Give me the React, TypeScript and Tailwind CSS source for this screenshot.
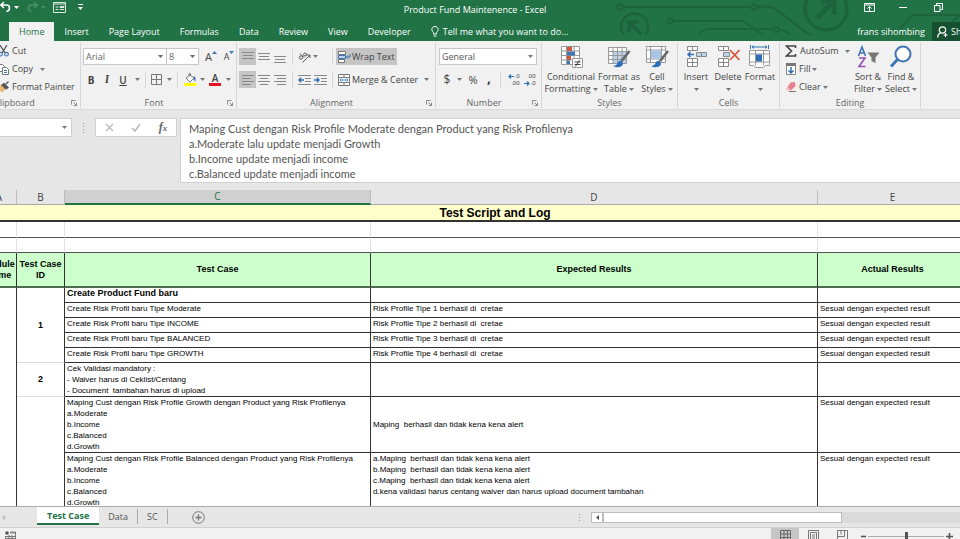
import { useState, ReactNode } from 'react';
import clsx from 'clsx';

type TestRow = {
  id?: string;
  idSpan?: number;
  test: string;
  bold?: boolean;
  expected?: string;
  expectedMiddle?: boolean;
  actual?: string;
  height: string;
};

const TABS = ['Home', 'Insert', 'Page Layout', 'Formulas', 'Data', 'Review', 'View', 'Developer'];

const SHEETS = ['Test Case', 'Data', 'SC'];

const FORMULA = [
  'Maping Cust dengan Risk Profile Moderate dengan Product yang Risk Profilenya',
  'a.Moderate lalu update menjadi Growth',
  'b.Income update menjadi income',
  'c.Balanced update menjadi income',
].join('\n');

const SESUAI = 'Sesuai dengan expected result';

const ROWS: TestRow[] = [
  { id: '1', idSpan: 5, test: 'Create Product Fund baru', bold: true, height: 'h-[15px]' },
  { test: 'Create Risk Profil baru Tipe Moderate', expected: 'Risk Profile Tipe 1 berhasil di  cretae', actual: SESUAI, height: 'h-[15px]' },
  { test: 'Create Risk Profil baru Tipe INCOME', expected: 'Risk Profile Tipe 2 berhasil di  cretae', actual: SESUAI, height: 'h-[15px]' },
  { test: 'Create Risk Profil baru Tipe BALANCED', expected: 'Risk Profile Tipe 3 berhasil di  cretae', actual: SESUAI, height: 'h-[15px]' },
  { test: 'Create Risk Profil baru Tipe GROWTH', expected: 'Risk Profile Tipe 4 berhasil di  cretae', actual: SESUAI, height: 'h-[15px]' },
  {
    id: '2',
    idSpan: 1,
    test: 'Cek Validasi mandatory :\n- Waiver harus di Ceklist/Centang\n- Document  tambahan harus di upload',
    height: 'h-[34px]',
  },
  {
    id: '',
    idSpan: 2,
    test: 'Maping Cust dengan Risk Profile Growth dengan Product yang Risk Profilenya\na.Moderate\nb.Income\nc.Balanced\nd.Growth',
    expected: 'Maping  berhasil dan tidak kena kena alert',
    expectedMiddle: true,
    actual: SESUAI,
    height: 'h-[56px]',
  },
  {
    test: 'Maping Cust dengan Risk Profile Balanced dengan Product yang Risk Profilenya\na.Moderate\nb.Income\nc.Balanced\nd.Growth',
    expected:
      'a.Maping  berhasil dan tidak kena kena alert\nb.Maping  berhasil dan tidak kena kena alert\nc.Maping  berhasil dan tidak kena kena alert\nd.kena validasi harus centang waiver dan harus upload document tambahan',
    actual: SESUAI,
    height: 'h-[56px]',
  },
];

function Caret({ className }: { className?: string }) {
  return (
    <svg viewBox="0 0 5 3" className={clsx('h-[3px] w-[5px] shrink-0', className)}>
      <path d="M0 0h5L2.500 3z" fill="currentColor" />
    </svg>
  );
}

function CaretButton({ label, className }: { label: string; className?: string }) {
  return (
    <button aria-label={label} className={clsx('flex h-[17px] shrink-0 items-center justify-center text-[#777]', className)}>
      <Caret />
    </button>
  );
}

function IconButton({ label, className, children }: { label: string; className?: string; children: ReactNode }) {
  return (
    <button aria-label={label} className={clsx('flex h-[17px] shrink-0 items-center justify-center', className)}>
      {children}
    </button>
  );
}

function Sep({ className }: { className?: string }) {
  return <span className={clsx('h-4 w-px shrink-0 bg-[#d8d8d8]', className)} />;
}

function Group({ label, className, launcher, children }: { label: string; className?: string; launcher?: boolean; children: ReactNode }) {
  return (
    <section aria-label={label} className={clsx('flex h-[65px] shrink-0 flex-col border-r border-[#d5d5d5]', className)}>
      <div className="min-h-0 flex-1">{children}</div>
      <div className="flex h-[11px] items-center leading-[11px] text-[#666]">
        <span className="flex-1 text-center">{label}</span>
        {launcher && (
          <button aria-label={`${label} settings`} className="mr-[3px] w-[6px]">
            <svg viewBox="0 0 7 7" className="h-[6px] w-[6px]" fill="none" stroke="#777">
              <path d="M.5 5.500V.5h5M3 3l3 3M6.500 3v3.500H3" />
            </svg>
          </button>
        )}
      </div>
    </section>
  );
}

function BigButton({ lines, className, children }: { lines: string[]; className?: string; children: ReactNode }) {
  return (
    <button className={clsx('flex shrink-0 flex-col items-center pt-[2px]', className)}>
      <svg viewBox="0 0 24 24" className="h-6 w-6" fill="none">
        {children}
      </svg>
      <span className="mt-0.5 whitespace-nowrap leading-3">{lines[0]}</span>
      <span className="flex h-3 items-center gap-0.5 whitespace-nowrap leading-3">
        {lines[1]}
        <Caret className="text-[#777]" />
      </span>
    </button>
  );
}

// Horizontal rules [y, x1, x2] for the alignment buttons
function Lines({ rows }: { rows: [number, number, number][] }) {
  return (
    <svg viewBox="0 0 12 12" className="h-3 w-3" stroke="#888">
      {rows.map(([y, x1, x2]) => (
        <path key={y} d={`M${x1} ${y}.5H${x2}`} />
      ))}
    </svg>
  );
}

function DecimalArrow({ right }: { right?: boolean }) {
  return (
    <svg viewBox="0 0 6 5" className={clsx('h-[5px] w-[6px]', right && 'rotate-180')} fill="none" stroke="#2f6fb5" strokeWidth="1.200">
      <path d="M6 2.500H1M3 .5l-2 2 2 2" />
    </svg>
  );
}

function TitleBar() {
  return (
    <div className="relative flex h-[22px] items-center">
      <div className="flex w-[100px] items-center pb-2 text-white">
        <button aria-label="Undo" className="h-3 w-[11px]">
          <svg viewBox="0 0 11 12" className="h-3 w-[11px]" fill="none" stroke="currentColor" strokeWidth="1.600">
            <path d="M4 1L.8 4 4 7M1 4h5.500c4 0 4 5.500 0 6.500" />
          </svg>
        </button>
        <Caret className="ml-[3px]" />
        <button aria-label="Redo" className="ml-2 h-3 w-[11px] text-[#4d8f6b]">
          <svg viewBox="0 0 11 12" className="h-3 w-[11px]" fill="none" stroke="currentColor" strokeWidth="1.600">
            <path d="M7 1l3.200 3L7 7M10 4H4.500c-4 0-4 5.500 0 6.500" />
          </svg>
        </button>
        <Caret className="ml-[3px] text-[#4d8f6b]" />
        <button aria-label="Form" className="ml-[7px]">
          <svg viewBox="0 0 13 11" className="h-[11px] w-[13px]" fill="none" stroke="#d8eadf">
            <path d="M.5.5h12v10H.5zM.5 2h12M2.500 5h3M2.500 7.500h3" />
            <path d="M7 4.500h4v1H7zM7 7.500h4" />
          </svg>
        </button>
        <button aria-label="Customize toolbar" className="ml-3">
          <svg viewBox="0 0 5 6" className="h-[6px] w-[5px]" fill="#fff">
            <path d="M0 0h5v1H0zM0 3h5L2.500 6z" />
          </svg>
        </button>
      </div>
      <h1 className="flex-1 pb-0.5 pr-[10px] text-center leading-4 text-white">Product Fund Maintenence - Excel</h1>
      <div className="flex w-[100px] items-center gap-6 pb-2 pl-1 text-white">
        <button aria-label="Ribbon display options">
          <svg viewBox="0 0 11 9" className="h-[9px] w-[11px]" fill="none" stroke="currentColor">
            <path d="M.5.5h10v8H.5zM.5 2h10M5.500 8V4M3.500 5.500l2-2 2 2" />
          </svg>
        </button>
        <button aria-label="Minimize">
          <svg viewBox="0 0 8 9" className="h-[9px] w-2" stroke="currentColor">
            <path d="M0 4.500h8" />
          </svg>
        </button>
        <button aria-label="Restore">
          <svg viewBox="0 0 9 9" className="ml-[3px] h-[9px] w-[9px]" fill="none" stroke="currentColor">
            <path d="M.5 2.500h5.500v6H.5zM2.500 2V.5h6v6H6.500" />
          </svg>
        </button>
      </div>
    </div>
  );
}

function Circuit() {
  return (
    <svg viewBox="0 0 360 35" className="pointer-events-none absolute right-0 top-0 h-[35px] w-[360px]" fill="none" stroke="#1d643c" strokeWidth="2">
      <circle cx="20" cy="7" r="2.800" />
      <path d="M23 7h128" />
      <circle cx="154" cy="7" r="2.800" />
      <path d="M157 7h13c3 0 5 2 8 4l33 25" strokeWidth="2.500" />
      <circle cx="70" cy="21" r="2.800" />
      <path d="M73 21h70l20 14M98 36c4-5 7-7 11-7h64" />
      <circle cx="176" cy="29.500" r="2.800" />
      <path d="M179 30h4l9 6" />
      <circle cx="34.500" cy="27" r="13.500" strokeWidth="2.500" />
      <path d="M41 34L30 23M29 32v-10h10" strokeWidth="3.500" />
      <circle cx="226" cy="9" r="21" strokeWidth="3.500" />
      <path d="M217 18l16-16M221 1h13v14" strokeWidth="5" />
      <path d="M300 29l12-14h48M352 22l8-7" />
    </svg>
  );
}

function RibbonTabs() {
  const [active, setActive] = useState('Home');

  return (
    <div className="relative flex h-[19px] items-stretch pl-[9px] text-white">
      <nav className="flex">
        {TABS.map(tab => (
          <button
            key={tab}
            onClick={() => setActive(tab)}
            className={clsx('whitespace-nowrap px-[10px]', tab === active && 'bg-[#f1f1f1] text-[#217346]')}
          >
            {tab}
          </button>
        ))}
      </nav>
      <button className="ml-[10px] flex items-center gap-1 whitespace-nowrap">
        <svg viewBox="0 0 8 11" className="h-[11px] w-2" fill="none" stroke="#fff">
          <path d="M2.500 8V6.500C-.5 4 1 .5 4 .5s4.500 3.500 1.500 6V8zM2.500 10h3" />
        </svg>
        Tell me what you want to do...
      </button>
      <div className="ml-auto flex items-stretch">
        <button className="mr-[7px] whitespace-nowrap">frans sihombing</button>
        <button className="flex w-7 items-center gap-[3px] overflow-hidden whitespace-nowrap bg-[#155030] pl-[5px]">
          <svg viewBox="0 0 11 12" className="h-3 w-[11px] shrink-0" fill="none" stroke="#fff" strokeWidth="1.200">
            <circle cx="5.500" cy="4" r="3.200" />
            <path d="M.7 11.500c0-3 1.300-4 3-4.700M8.500 7v4M6.500 9h4" />
          </svg>
          Share
        </button>
      </div>
    </div>
  );
}

function Ribbon() {
  return (
    <div className="flex h-[69px] overflow-hidden border-b border-[#d9d9d9] bg-[#f1f1f1] pt-[2px] text-[#444]">
      <Group label="Clipboard" launcher className="-ml-[10px] w-[91px] [&_span]:text-left [&>div:last-child]:pl-1">
        <div className="flex flex-col items-start gap-[2px] pl-2">
          <button className="flex h-4 items-center gap-[3px]">
            <svg viewBox="0 0 11 12" className="h-3 w-[11px]" fill="none">
              <path d="M2 0l5 8M9 0L4 8" stroke="#555" strokeWidth="1.300" />
              <circle cx="2.500" cy="9.200" r="1.800" stroke="#3f74b5" strokeWidth="1.200" />
              <circle cx="8.500" cy="9.200" r="1.800" stroke="#3f74b5" strokeWidth="1.200" />
            </svg>
            Cut
          </button>
          <div className="flex h-4 items-center">
            <button className="flex items-center gap-[3px]">
              <svg viewBox="0 0 11 12" className="h-3 w-[11px]" fill="#fff" stroke="#777">
                <path d="M.5 1.500h4l2 2v5h-6z" />
                <path d="M4.500 4.500h4l2 2v5h-6z" />
                <path d="M6 7.500h3M6 9.500h3" stroke="#3f74b5" />
              </svg>
              Copy
            </button>
            <CaretButton label="Copy options" className="ml-[5px] w-2" />
          </div>
          <button className="flex h-4 items-center gap-[3px] whitespace-nowrap">
            <svg viewBox="0 0 11 12" className="h-3 w-[11px]">
              <path d="M0 6l3.500-2.500 4 4-3 4L.5 9z" fill="#eab676" />
              <path d="M4 4l2-1.500 4 4L8 8zM8 3l2.500-2.500" fill="#555" stroke="#555" strokeWidth="1.300" />
            </svg>
            Format Painter
          </button>
        </div>
      </Group>

      <Group label="Font" launcher className="w-[156px]">
        <div className="flex flex-col gap-1.5 pl-[2px] pt-[5px]">
          <div className="flex items-center">
            <div className="relative text-[#666]">
              <select aria-label="Font name" className="h-[17px] w-[84px] appearance-none border border-[#c6c6c6] bg-white pl-[2px]">
                <option>Arial</option>
              </select>
              <Caret className="pointer-events-none absolute right-1 top-[7px]" />
            </div>
            <div className="relative -ml-px text-[#666]">
              <select aria-label="Font size" className="h-[17px] w-[33px] appearance-none border border-[#c6c6c6] bg-white pl-[2px]">
                <option>8</option>
              </select>
              <Caret className="pointer-events-none absolute right-1 top-[7px]" />
            </div>
            <IconButton label="Increase font size" className="ml-1 w-4">
              <span className="text-[11px]">A</span>
              <Caret className="mb-2 rotate-180 text-[#3f74b5]" />
            </IconButton>
            <IconButton label="Decrease font size" className="ml-0.5 w-4">
              <span className="mt-px">A</span>
              <Caret className="mb-2 text-[#3f74b5]" />
            </IconButton>
          </div>
          <div className="flex items-center">
            <IconButton label="Bold" className="w-4"><b className="text-[10px]">B</b></IconButton>
            <IconButton label="Italic" className="w-4"><i className="font-serif text-[11px] font-bold">I</i></IconButton>
            <IconButton label="Underline" className="w-4"><u className="text-[10px] font-semibold">U</u></IconButton>
            <CaretButton label="Underline style" className="w-3" />
            <Sep className="mx-[2px]" />
            <IconButton label="Borders" className="w-[17px]">
              <svg viewBox="0 0 11 11" className="h-[11px] w-[11px]" fill="none" stroke="#777">
                <path d="M.5.5h10v10H.5zM5.500.5v10M.5 5.500h10" />
              </svg>
            </IconButton>
            <CaretButton label="Border style" className="w-2" />
            <Sep className="mx-[4px]" />
            <IconButton label="Fill color" className="w-4">
              <svg viewBox="0 0 13 13" className="h-[13px] w-[13px]" fill="none">
                <path d="M2 5l4-3 4 3-4 4z" fill="#fff" stroke="#777" />
                <path d="M5 3V.8h1.500V3" stroke="#777" />
                <path d="M10 3c2 1 2 4 1 5.500L9.500 6z" fill="#3f74b5" />
                <path d="M.5 10h12v3H.5z" fill="#ffff00" />
              </svg>
            </IconButton>
            <CaretButton label="Fill color options" className="w-2" />
            <IconButton label="Font color" className="relative w-[18px]">
              <span className="mb-1 text-[10px] font-semibold">A</span>
              <span className="absolute bottom-[2px] left-[3px] h-[3px] w-3 bg-[#e81123]" />
            </IconButton>
            <CaretButton label="Font color options" className="w-2" />
          </div>
        </div>
      </Group>

      <Group label="Alignment" launcher className="w-[199px]">
        <div className="flex flex-col gap-1.5 pl-[2px] pt-[5px]">
          <div className="flex items-center">
            <IconButton label="Top align" className="w-[17px] bg-[#c5c5c5]"><Lines rows={[[1, 0, 12], [4, 1, 11], [7, 0, 12]]} /></IconButton>
            <IconButton label="Middle align" className="w-4"><Lines rows={[[2, 0, 12], [5, 1, 11], [8, 0, 12]]} /></IconButton>
            <IconButton label="Bottom align" className="w-4"><Lines rows={[[5, 0, 12], [8, 1, 11], [11, 0, 12]]} /></IconButton>
            <Sep className="mx-1" />
            <IconButton label="Orientation" className="w-[14px]">
              <svg viewBox="0 0 13 12" className="h-3 w-[13px]" fill="none" stroke="#555">
                <circle cx="3" cy="6.500" r="1.700" />
                <path d="M2 2.500l4 4M4.500 11.500l7-7M8.500 4h3.500v3" />
                <circle cx="7" cy="3.500" r="1.500" />
              </svg>
            </IconButton>
            <CaretButton label="Orientation options" className="w-2" />
            <Sep className="ml-[13px] mr-[3px]" />
            <button className="flex h-[17px] items-center gap-px whitespace-nowrap bg-[#c5c5c5] pl-[2px] pr-[2px]">
              <svg viewBox="0 0 13 12" className="h-3 w-[13px]" fill="#fff" stroke="#777">
                <path d="M.5.5h7v3h-7zM.5 8.500h6v3h-6z" />
                <path d="M.5 4.500h7v3h-7z" fill="#bcd3ea" stroke="#3f74b5" />
                <path d="M12 3v3H8.500M10 4.500L8.500 6 10 7.500" fill="none" stroke="#3f74b5" />
              </svg>
              Wrap Text
            </button>
          </div>
          <div className="flex items-center">
            <IconButton label="Align left" className="w-[17px] bg-[#c5c5c5]"><Lines rows={[[1, 0, 12], [4, 0, 9], [7, 0, 12], [10, 0, 9]]} /></IconButton>
            <IconButton label="Center" className="w-4"><Lines rows={[[1, 0, 12], [4, 2, 10], [7, 0, 12], [10, 2, 10]]} /></IconButton>
            <IconButton label="Align right" className="w-4"><Lines rows={[[1, 0, 12], [4, 3, 12], [7, 0, 12], [10, 3, 12]]} /></IconButton>
            <Sep className="mx-1" />
            <IconButton label="Decrease indent" className="w-[14px]">
              <svg viewBox="0 0 13 12" className="h-3 w-[13px]" fill="none" stroke="#888">
                <path d="M0 1.500h13M7 4.500h6M7 7.500h6M0 10.500h13" />
                <path d="M6 6H1M3.200 3.800L1 6l2.200 2.200" stroke="#2f6fb5" strokeWidth="1.400" />
              </svg>
            </IconButton>
            <IconButton label="Increase indent" className="ml-[2px] w-[14px]">
              <svg viewBox="0 0 13 12" className="h-3 w-[13px]" fill="none" stroke="#888">
                <path d="M0 1.500h13M7 4.500h6M7 7.500h6M0 10.500h13" />
                <path d="M0 6h5M2.800 3.800L5 6 2.800 8.200" stroke="#2f6fb5" strokeWidth="1.400" />
              </svg>
            </IconButton>
            <Sep className="ml-[5px] mr-[3px]" />
            <button className="flex h-[17px] items-center gap-[2px] whitespace-nowrap pl-[2px]">
              <svg viewBox="0 0 12 12" className="h-3 w-3" fill="#fff" stroke="#777">
                <path d="M.5.5h11v11H.5zM.5 3.500h11M.5 8.500h11M6 .5v3M6 8.500v3" />
                <path d="M2 6h8M3.500 4.800L2 6l1.500 1.200M8.500 4.800L10 6 8.500 7.200" fill="none" stroke="#3f74b5" />
              </svg>
              Merge &amp; Center
            </button>
            <CaretButton label="Merge options" className="ml-1 w-2" />
          </div>
        </div>
      </Group>

      <Group label="Number" launcher className="w-[106px]">
        <div className="flex flex-col gap-1.5 pl-[3px] pt-[5px]">
          <div className="relative w-[98px] text-[#555]">
            <select aria-label="Number format" className="h-[17px] w-full appearance-none border border-[#c6c6c6] bg-white pl-[2px]">
              <option>General</option>
            </select>
            <Caret className="pointer-events-none absolute right-1 top-[7px] text-[#777]" />
          </div>
          <div className="flex items-center">
            <IconButton label="Accounting format" className="w-4 text-[12px]">$</IconButton>
            <CaretButton label="Currency options" className="w-2" />
            <IconButton label="Percent style" className="w-5 text-[11px]">%</IconButton>
            <IconButton label="Comma style" className="w-3 pb-1 text-[14px] font-bold">,</IconButton>
            <Sep className="mx-[5px]" />
            <IconButton label="Increase decimal" className="w-4">
              <span className="flex flex-col items-end font-['Liberation_Sans',sans-serif] text-[6px] leading-[7px]">
                <span className="flex items-center"><DecimalArrow />.0</span>
                <span>.00</span>
              </span>
            </IconButton>
            <IconButton label="Decrease decimal" className="w-4">
              <span className="flex flex-col items-end font-['Liberation_Sans',sans-serif] text-[6px] leading-[7px]">
                <span>.00</span>
                <span className="flex items-center"><DecimalArrow right />.0</span>
              </span>
            </IconButton>
          </div>
        </div>
      </Group>

      <Group label="Styles" className="w-[136px]">
        <div className="flex">
          <BigButton lines={['Conditional', 'Formatting']} className="w-[58px]">
            <path d="M2.500 1.500h18v18h-18zM2.500 6h18M2.500 10.500h18M2.500 15h18M7.500 1.500v18M15 1.500v18" fill="#fff" stroke="#999" />
            <path d="M8 2h5v4H8zM8 11h4v4H8z" fill="#d0583a" />
            <path d="M8 6.500h8v4H8z" fill="#3f74b5" />
            <path d="M8 15.500h3v3.500H8z" fill="#3f74b5" />
            <path d="M13.500 13.500h10v9h-10z" fill="#fff" stroke="#999" />
            <path d="M15.500 17h6M15.500 19.500h6M20.500 15l-4 6.500" stroke="#444" />
          </BigButton>
          <BigButton lines={['Format as', 'Table']} className="w-[38px]">
            <path d="M1.500 2.500h18v16h-18z" fill="#fff" stroke="#999" />
            <path d="M6 6h13v12H6z" fill="#bcd3ea" />
            <path d="M1.500 6.500h18M1.500 10.500h18M1.500 14.500h18M6 2.500v16M10.500 2.500v16M15 2.500v16" stroke="#999" />
            <path d="M22.500 6l-8 10" stroke="#666" strokeWidth="2.600" />
            <path d="M15 16c-3-1-4 1-5 3-1 1.500-3 2-4 2 3 2 9 2 10-2z" fill="#2f6fb5" />
          </BigButton>
          <BigButton lines={['Cell', 'Styles']} className="w-[38px]">
            <path d="M1.500 1.500h19v16h-19zM1.500 5h19M1.500 14h19M5.500 1.500v16M16.500 1.500v16" fill="#fff" stroke="#999" />
            <path d="M6 5.500h10v8H6z" fill="#a9c6e6" />
            <path d="M23 6l-8 10" stroke="#666" strokeWidth="2.600" />
            <path d="M15 16c-3-1-4 1-5 3-1 1.500-3 2-4 2 3 2 9 2 10-2z" fill="#2f6fb5" />
          </BigButton>
        </div>
      </Group>

      <Group label="Cells" className="w-[102px]">
        <div className="flex pl-[2px]">
          <BigButton lines={['Insert', '']} className="w-8">
            <path d="M3.500 1.500h10v4h-10zM8.500 1.500v4M3.500 13.500h10v8h-10zM8.500 13.500v8M3.500 17.500h10" fill="#fff" stroke="#888" />
            <path d="M12.500 7.500h10v4h-10zM17.500 7.500v4" fill="#bcd3ea" stroke="#888" />
            <path d="M10 9.500H4M6.500 7L4 9.500 6.500 12" stroke="#2f6fb5" strokeWidth="1.500" />
          </BigButton>
          <BigButton lines={['Delete', '']} className="w-8">
            <path d="M2.500 1.500h10v4h-10zM7.500 1.500v4M2.500 13.500h10v8h-10zM7.500 13.500v8M2.500 17.500h10" fill="#fff" stroke="#888" />
            <path d="M7.500 7.500h6v4h-6z" fill="#bcd3ea" stroke="#888" />
            <path d="M14 5l9.500 10M23.500 5L14 15" stroke="#d8573a" strokeWidth="1.800" />
          </BigButton>
          <BigButton lines={['Format', '']} className="w-8">
            <path d="M1.500 5.500h20v15h-4l-2 2h-8l-2-2h-4zM1.500 9h20M1.500 17h20M7.500 5.500v15M15.500 5.500v15" fill="#fff" stroke="#999" />
            <path d="M8 9.500h6v7H8z" fill="#2f6fb5" />
            <path d="M2.500 0v4M20.500 0v4M4 2h15M6 .5L4 2l2 1.500M17 .5L19 2l-2 1.500" stroke="#2f6fb5" />
          </BigButton>
        </div>
      </Group>

      <Group label="Editing" className="w-[141px]">
        <div className="flex pl-[5px]">
          <div className="flex w-[66px] flex-col items-start gap-[2px]">
            <div className="flex h-4 w-full items-center justify-between">
              <button className="flex items-center gap-[3px]">
                <svg viewBox="0 0 12 12" className="h-3 w-3" fill="none" stroke="#444" strokeWidth="1.600">
                  <path d="M10.500 3V1H1.500l5 5-5 5h9V9" />
                </svg>
                AutoSum
              </button>
              <CaretButton label="AutoSum options" className="w-2" />
            </div>
            <button className="flex h-4 items-center gap-[2px]">
              <svg viewBox="0 0 12 12" className="h-3 w-3" fill="none">
                <path d="M1.500.5h9v11h-9z" fill="#fff" stroke="#888" />
                <path d="M1 0h10v3H1z" fill="#777" />
                <path d="M6 4v6M3.500 7.500L6 10l2.500-2.500" stroke="#2f6fb5" strokeWidth="1.500" />
              </svg>
              Fill
              <Caret className="text-[#777]" />
            </button>
            <button className="flex h-4 items-center gap-[2px]">
              <svg viewBox="0 0 12 12" className="h-3 w-3">
                <path d="M5.500 1.500L10 1l.5 4L6 9.500 2.500 6z" fill="#e8808f" />
                <path d="M2.500 6L6 9.500H2.500L1 8z" fill="#f4b9c1" />
                <path d="M4 10.500h7" stroke="#777" />
              </svg>
              Clear
              <Caret className="text-[#777]" />
            </button>
          </div>
          <BigButton lines={['Sort &', 'Filter']} className="w-[34px]">
            <path d="M2.500 11L6 2l3.500 9M3.700 8h4.600" stroke="#3f74b5" strokeWidth="1.600" />
            <path d="M3 13h6l-6 8.500h6.500" stroke="#9250b0" strokeWidth="1.600" />
            <path d="M11.500 7.500h12l-4 5v5.500l-4-2v-3.500z" fill="#777" />
          </BigButton>
          <BigButton lines={['Find &', 'Select']} className="w-8">
            <circle cx="14" cy="9" r="7.500" fill="#fff" stroke="#3f74b5" strokeWidth="2" />
            <path d="M8.500 14.500l-6.500 7" stroke="#3f74b5" strokeWidth="3" />
          </BigButton>
        </div>
      </Group>
    </div>
  );
}

function FormulaBar() {
  return (
    <div className="flex h-[80px] items-start bg-[#e6e6e6] pt-2">
      <div className="relative">
        <input aria-label="Name box" className="h-[19px] w-[72px] border border-l-0 border-[#d0d0d0] bg-white" />
        <Caret className="pointer-events-none absolute right-[5px] top-2 text-[#777]" />
      </div>
      <span className="mx-[11px] flex h-[19px] w-px flex-col justify-center gap-0.5">
        <i className="h-px bg-[#999]" />
        <i className="h-px bg-[#999]" />
        <i className="h-px bg-[#999]" />
        <i className="h-px bg-[#999]" />
      </span>
      <div className="flex h-[19px] w-[82px] items-center justify-around border border-[#d0d0d0] bg-white">
        <button aria-label="Cancel">
          <svg viewBox="0 0 9 9" className="h-[9px] w-[9px]" stroke="#bbb" strokeWidth="1.300"><path d="M1 1l7 7M8 1L1 8" /></svg>
        </button>
        <button aria-label="Enter">
          <svg viewBox="0 0 10 9" className="h-[9px] w-[10px]" fill="none" stroke="#bbb" strokeWidth="1.600"><path d="M1 5l3 3 5-7" /></svg>
        </button>
        <button aria-label="Insert function" className="font-['Liberation_Serif',serif] text-[12px] font-bold italic leading-4 text-[#666]">
          f<span className="text-[9px]">x</span>
        </button>
      </div>
      <textarea
        aria-label="Formula bar"
        rows={4}
        defaultValue={FORMULA}
        className="ml-[3px] block h-[65px] flex-1 resize-none overflow-hidden border border-r-0 border-[#d0d0d0] bg-white pl-2 pt-[2px] font-['Lato',sans-serif] text-[11px] leading-[15px] text-[#555]"
      />
    </div>
  );
}

function Sheet() {
  return (
    <main className="min-h-0 flex-1 overflow-hidden bg-white">
      <table className="-ml-[18px] w-[1026px] table-fixed border-separate border-spacing-0 font-['Liberation_Sans',Arial,sans-serif] text-[8px] leading-[11px] text-black">
        <colgroup>
          <col className="w-[35px]" />
          <col className="w-12" />
          <col className="w-[306px]" />
          <col className="w-[447px]" />
          <col className="w-[150px]" />
          <col className="w-10" />
        </colgroup>
        <thead>
          <tr className="h-[15px] bg-[#e6e6e6] font-['Open_Sans',sans-serif] text-[10px] leading-[13px] text-[#444]">
            {['A', 'B', 'C', 'D', 'E', 'F'].map(col => (
              <th
                key={col}
                className={clsx(
                  'border-r border-[#bdbdbd] p-0 font-normal',
                  col === 'C' ? 'border-b-2 border-b-[#217346] bg-[#d0d0d0] text-[#217346]' : 'border-b border-b-[#ababab]'
                )}
              >
                {col}
              </th>
            ))}
          </tr>
          <tr className="h-[17px]">
            <th colSpan={6} className="border-b-2 border-[#333] bg-[#ffffcc] p-0 text-[12px] leading-[14px]">Test Script and Log</th>
          </tr>
          {[0, 1].map(n => (
            <tr key={n} className={n === 0 ? 'h-4' : 'h-[15px]'}>
              {[0, 1, 2, 3, 4, 5].map(c => (
                <td key={c} className="border-b border-r border-r-[#e2e2e2] border-b-[#555] p-0" />
              ))}
            </tr>
          ))}
          <tr className="h-[35px] bg-[#ccffcc] text-[9px]">
            {['Module\nName', 'Test Case\nID', 'Test Case', 'Expected Results', 'Actual Results', ''].map(title => (
              <th key={title} className="whitespace-pre border-b-2 border-r border-b-[#4f6b4f] border-r-[#333] p-0">{title}</th>
            ))}
          </tr>
        </thead>
        <tbody>
          {ROWS.map((row, i) => (
            <tr key={i} className={clsx('align-top', row.height)}>
              {i === 0 && <td rowSpan={ROWS.length} className="border-r border-[#333] p-0" />}
              {row.idSpan && (
                <td rowSpan={row.idSpan} className="border-b border-r border-b-[#ddd] border-r-[#333] p-0 text-center align-middle text-[9px] font-bold">
                  {row.id}
                </td>
              )}
              <td className={clsx('whitespace-pre border-b border-r border-[#333] p-0 pl-[2px]', row.bold && 'text-[9px] font-bold')}>{row.test}</td>
              <td className={clsx('whitespace-pre border-b border-r border-[#333] p-0 pl-[2px]', row.expectedMiddle && 'align-middle')}>{row.expected}</td>
              <td className="whitespace-pre border-b border-r border-[#333] p-0 pl-[2px]">{row.actual}</td>
              <td className="border-b border-[#333] p-0" />
            </tr>
          ))}
        </tbody>
      </table>
    </main>
  );
}

function SheetTabs() {
  const [sheet, setSheet] = useState('Test Case');

  return (
    <div className="flex h-[21px] shrink-0 items-start border-t border-[#ababab] bg-[#e6e6e6]">
      <button aria-label="Next sheet" className="flex h-5 w-[37px] items-center pl-[3px]">
        <svg viewBox="0 0 3 5" className="h-[5px] w-[3px]" fill="#bbb"><path d="M0 0l3 2.500L0 5z" /></svg>
      </button>
      {SHEETS.map(name => (
        <button
          key={name}
          onClick={() => setSheet(name)}
          className={clsx(
            'whitespace-nowrap',
            name === sheet ? 'h-[18px] border-b-2 border-[#217346] bg-white px-[10px] pt-px font-bold text-[#217346]' : 'my-[2px] h-[15px] border-r border-[#ababab] px-[9px] text-[#555]'
          )}
        >
          {name}
        </button>
      ))}
      <button aria-label="New sheet" className="ml-6 flex h-5 items-center">
        <svg viewBox="0 0 13 13" className="h-[13px] w-[13px]" fill="none" stroke="#777">
          <circle cx="6.500" cy="6.500" r="5.800" />
          <path d="M6.500 3.500v6M3.500 6.500h6" strokeWidth="1.400" />
        </svg>
      </button>
      <div className="ml-auto flex h-5 w-2/5 items-center pl-[3px]">
        <span className="mr-[11px] flex w-px flex-col gap-0.5">
          <i className="h-px bg-[#999]" />
          <i className="h-px bg-[#999]" />
          <i className="h-px bg-[#999]" />
        </span>
        <button aria-label="Scroll left" className="flex h-[11px] w-3 items-center justify-center border border-[#bbb] bg-white">
          <svg viewBox="0 0 3 5" className="h-[5px] w-[3px]" fill="#555"><path d="M3 0L0 2.500 3 5z" /></svg>
        </button>
        <div className="h-[11px] flex-1 bg-[#dadada]">
          <div className="h-full w-[67%] border border-[#bbb] bg-white" />
        </div>
      </div>
    </div>
  );
}

function StatusBar() {
  return (
    <footer className="flex h-3 shrink-0 items-start overflow-hidden border-t border-[#d0d0d0] bg-[#f1f1f1]">
      <button aria-label="Record macro" className="ml-[5px] mt-[3px]">
        <svg viewBox="0 0 11 10" className="h-[10px] w-[11px]" fill="none" stroke="#777">
          <circle cx="2" cy="2" r="1.800" fill="#555" stroke="none" />
          <path d="M5 1h5.500v8.500h-10V5M5 2h5M1 5.500h9M1 7.500h9M4 4v5M7 4v5" />
        </svg>
      </button>
      <div className="ml-auto flex items-start pr-[7px]">
        <button aria-label="Normal view" className="flex h-3 w-7 justify-center bg-[#c6c6c6] pt-[2px]">
          <svg viewBox="0 0 11 11" className="h-[11px] w-[11px]" fill="none" stroke="#666"><path d="M.5.5h10v10H.5zM.5 4h10M.5 7.500h10M4 .5v10M7.500.5v10" /></svg>
        </button>
        <button aria-label="Page layout view" className="flex h-3 w-7 justify-center pl-px pt-[2px]">
          <svg viewBox="0 0 11 11" className="h-[11px] w-[11px]" fill="none" stroke="#777"><path d="M.5.5h10v10H.5zM2.500 2.500h6v8h-6zM4 5h3M4 7h3M4 9h3" /></svg>
        </button>
        <button aria-label="Page break view" className="flex h-3 w-7 justify-center pl-[2px] pt-[2px]">
          <svg viewBox="0 0 11 11" className="h-[11px] w-[11px]" fill="none" stroke="#777"><path d="M.5 10.500V.5h10v10M.5 6.500h7V.5M4 .5v4" /></svg>
        </button>
        <button aria-label="Zoom out" className="ml-1 flex h-4 w-[9px] items-center justify-center">
          <svg viewBox="0 0 5 5" className="h-[5px] w-[5px]" stroke="#555" strokeWidth="1.600"><path d="M0 2.500h5" /></svg>
        </button>
        <input
          type="range"
          aria-label="Zoom"
          defaultValue={50}
          className="h-4 w-[76px] appearance-none bg-transparent [&::-webkit-slider-runnable-track]:h-px [&::-webkit-slider-runnable-track]:bg-[#aaa] [&::-webkit-slider-thumb]:-mt-1 [&::-webkit-slider-thumb]:h-[9px] [&::-webkit-slider-thumb]:w-[3px] [&::-webkit-slider-thumb]:appearance-none [&::-webkit-slider-thumb]:bg-[#555]"
        />
        <button aria-label="Zoom in" className="ml-[2px] flex h-4 w-[7px] items-center justify-center">
          <svg viewBox="0 0 7 7" className="h-[7px] w-[7px]" stroke="#555" strokeWidth="1.600"><path d="M0 3.500h7M3.500 0v7" /></svg>
        </button>
      </div>
    </footer>
  );
}

export default function App() {
  return (
    <div className="flex h-screen flex-col overflow-hidden bg-[#e6e6e6] font-['Open_Sans',sans-serif] text-[9px] leading-3">
      <header className="relative shrink-0 bg-[#217346]">
        <Circuit />
        <TitleBar />
        <RibbonTabs />
      </header>
      <Ribbon />
      <FormulaBar />
      <Sheet />
      <SheetTabs />
      <StatusBar />
    </div>
  );
}
